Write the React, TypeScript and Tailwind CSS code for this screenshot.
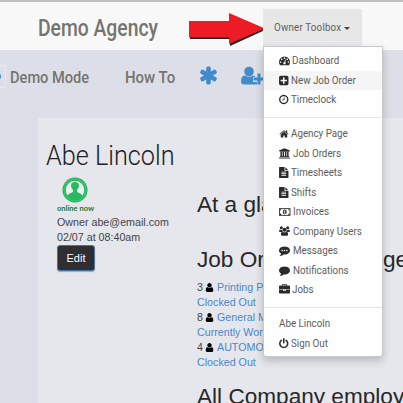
import React from "react";

const ASTERISK =
  "M1546 1050q46 26 59.5 77.5t-12.5 97.5l-64 110q-26 46-77.5 59.5t-97.5-12.5l-266-153v307q0 52-38 90t-90 38h-128q-52 0-90-38t-38-90v-307l-266 153q-46 26-97.5 12.5t-77.5-59.5l-64-110q-26-46-12.5-97.5t59.5-77.5l266-154-266-154q-46-26-59.5-77.5t12.5-97.5l64-110q26-46 77.5-59.5t97.5 12.5l266 153v-307q0-52 38-90t90-38h128q52 0 90 38t38 90v307l266-153q46-26 97.5-12.5t77.5 59.5l64 110q26 46 12.5 97.5t-59.5 77.5l-266 154z";
const PLUS =
  "M1408 960v-128q0-26-19-45t-45-19h-320v-320q0-26-19-45t-45-19h-128q-26 0-45 19t-19 45v320h-320q-26 0-45 19t-19 45v128q0 26 19 45t45 19h320v320q0 26 19 45t45 19h128q26 0 45-19t19-45v-320h320q26 0 45-19t19-45zm256-544v960q0 119-84.5 203.5t-203.5 84.5h-960q-119 0-203.5-84.5t-84.5-203.5v-960q0-119 84.5-203.5t203.5-84.5h960q119 0 203.5 84.5t84.5 203.5z";
const CLOCK =
  "M1024 544v448q0 14-9 23t-23 9h-320q-14 0-23-9t-9-23v-64q0-14 9-23t23-9h224v-352q0-14 9-23t23-9h64q14 0 23 9t9 23zm416 352q0-148-73-273t-198-198-273-73-273 73-198 198-73 273 73 273 198 198 273 73 273-73 198-198 73-273zm224 0q0 209-103 385.5t-279.5 279.5-385.5 103-385.5-103-279.5-279.5-103-385.5 103-385.5 279.5-279.5 385.5-103 385.5 103 279.5 279.5 103 385.5z";
const GAUGE =
  "M384 1152q0-53-37.5-90.5t-90.5-37.5-90.5 37.5-37.5 90.5 37.5 90.5 90.5 37.5 90.5-37.5 37.5-90.5zm192-448q0-53-37.5-90.5t-90.5-37.5-90.5 37.5-37.5 90.5 37.5 90.5 90.5 37.5 90.5-37.5 37.5-90.5zm428 481l101-382q6-26-7.5-48.5t-38.5-29.5-48 6.5-30 39.5l-101 382q-60 5-107 43.5t-63 98.5q-20 77 20 146t117 89 146-20 89-117q16-60-6-117t-72-91zm660-33q0-53-37.5-90.5t-90.5-37.5-90.5 37.5-37.5 90.5 37.5 90.5 90.5 37.5 90.5-37.5 37.5-90.5zm-640-640q0-53-37.5-90.5t-90.5-37.5-90.5 37.5-37.5 90.5 37.5 90.5 90.5 37.5 90.5-37.5 37.5-90.5zm448 192q0-53-37.5-90.5t-90.5-37.5-90.5 37.5-37.5 90.5 37.5 90.5 90.5 37.5 90.5-37.5 37.5-90.5zm320 448q0 261-141 483-19 29-54 29h-1402q-35 0-54-29-141-221-141-483 0-182 71-348t191-286 286-191 348-71 348 71 286 191 191 286 71 348z";
const USER =
  "M1536 1399q0 109-62.5 187t-150.5 78h-854q-88 0-150.5-78t-62.5-187q0-85 8.5-160.5t31.5-152 58.5-131 94-89 134.5-34.5q131 128 313 128t313-128q76 0 134.5 34.5t94 89 58.5 131 31.5 152 8.5 160.5zm-256-887q0 159-112.5 271.5t-271.5 112.5-271.5-112.5-112.5-271.5 112.5-271.5 271.5-112.5 271.5 112.5 112.5 271.5z";
const HOME =
  "M1472 992v480q0 26-19 45t-45 19h-384v-384h-256v384h-384q-26 0-45-19t-19-45v-480q0-1 .5-3t.5-3l575-474 575 474q1 2 1 6zm223-69l-62 74q-8 9-21 11h-3q-13 0-21-7l-692-577-692 577q-12 8-24 7-13-2-21-11l-62-74q-8-10-7-23.5t11-21.5l719-599q32-26 76-26t76 26l244 204v-195q0-14 9-23t23-9h192q14 0 23 9t9 23v408l219 182q10 8 11 21.5t-7 23.5z";
const BANK =
  "M896 60L1792 420v128h-120q0 50-70 50H190q-70 0-70-50H0V420zM230 660h240v700h110V660h240v700h152V660h240v700h110V660h240v700h50q60 0 60 56v56H120v-56q0-56 60-56h50zM60 1530h1672q60 0 60 56v110H0v-110q0-56 60-56z";
const FILE =
  "M1596 476q14 14 28 36h-472v-472q22 14 36 28zm-476 164h544v1056q0 40-28 68t-68 28h-1344q-40 0-68-28t-28-68v-1600q0-40 28-68t68-28h800v544q0 40 28 68t68 28zm160 736v-64q0-14-9-23t-23-9h-704q-14 0-23 9t-9 23v64q0 14 9 23t23 9h704q14 0 23-9t9-23zm0-256v-64q0-14-9-23t-23-9h-704q-14 0-23 9t-9 23v64q0 14 9 23t23 9h704q14 0 23-9t9-23zm0-256v-64q0-14-9-23t-23-9h-704q-14 0-23 9t-9 23v64q0 14 9 23t23 9h704q14 0 23-9t9-23z";
const COMMENT =
  "M1792 896q0 174-120 321.5t-326 233-450 85.5q-70 0-145-8-198 175-460 242-49 14-114 22-17 2-30.5-9t-17.5-29v-1q-3-4-.5-12t2-10 4.5-9.5l6-9 7-8.5 8-9q7-8 31-34.5t34.5-38 31-39.5 32.5-51 27-59 26-76q-157-89-247.5-220t-90.5-281q0-174 120-321.5t326-233 450-85.5 450 85.5 326 233 120 321.5z";
const CASE =
  "M640 256h512v-128h-512v128zm1152 640v480q0 66-47 113t-113 47h-1472q-66 0-113-47t-47-113v-480h672v160q0 26 19 45t45 19h320q26 0 45-19t19-45v-160h672zm-768 0v128h-256v-128h256zm768-480v384h-1792v-384q0-66 47-113t113-47h352v-160q0-40 28-68t68-28h576q40 0 68 28t28 68v160h352q66 0 113 47t47 113z";
const POWER =
  "M1664 896q0 156-61 298t-164 245-245 164-298 61-298-61-245-164-164-245-61-298q0-182 80.5-343t226.5-270q43-32 95.5-25t83.5 50q32 42 24.5 94.5t-49.5 84.5q-98 74-151.5 181t-53.5 228q0 104 40.5 198.5t109.5 163.5 163.5 109.5 198.5 40.5 198.5-40.5 163.5-109.5 109.5-163.5 40.5-198.5q0-121-53.5-228t-151.5-181q-42-32-49.5-84.5t24.5-94.5q31-43 84-50t95 25q146 109 226.5 270t80.5 343zm-640-768v640q0 52-38 90t-90 38-90-38-38-90v-640q0-52 38-90t90-38 90 38 38 90z";

function Glyph({ d, box = "0 0 1792 1792", className = "h-[11px] w-[11px]", children }: { d?: string; box?: string; className?: string; children?: React.ReactNode }) {
  return (
    <svg viewBox={box} className={`shrink-0 ${className}`} fill="currentColor">
      {d && <path d={d} />}
      {children}
    </svg>
  );
}

const SQUARE = "128 0 1536 1792";

type Item = { label: string; icon?: React.ReactNode; gap?: string; active?: boolean };

const groups: Item[][] = [
  [
    { label: "Dashboard", icon: <Glyph d={GAUGE} />, gap: "gap-[2px]" },
    { label: "New Job Order", icon: <Glyph d={PLUS} box={SQUARE} className="h-[11px] w-[9.5px]" />, active: true },
    { label: "Timeclock", icon: <Glyph d={CLOCK} box={SQUARE} className="h-[11px] w-[9.5px]" />, gap: "gap-[2px]" },
  ],
  [
    { label: "Agency Page", icon: <Glyph d={HOME} className="h-[10px] w-[10px]" />, gap: "gap-[2px]" },
    { label: "Job Orders", icon: <Glyph d={BANK} />, gap: "gap-[3px]" },
    { label: "Timesheets", icon: <Glyph d={FILE} box={SQUARE} className="h-[11px] w-[9.5px]" />, gap: "gap-[2px]" },
    { label: "Shifts", icon: <Glyph d={FILE} box={SQUARE} className="h-[11px] w-[9.5px]" />, gap: "gap-[2px]" },
    {
      label: "Invoices",
      icon: (
        <Glyph box="0 0 24 16" className="h-[8px] w-[11.5px]">
          <rect x="1" y="1" width="22" height="14" fill="none" stroke="currentColor" strokeWidth="1.8" />
          <path d="M2 2h3a3 3 0 0 1-3 3zM22 2h-3a3 3 0 0 0 3 3zM2 14h3a3 3 0 0 0-3-3zM22 14h-3a3 3 0 0 1 3-3z" />
          <ellipse cx="12" cy="8" rx="4" ry="5" />
          <path d="M11.3 5h1.6v5h1v1.2h-3.6V10h1V7l-1 .3V6z" fill="white" />
        </Glyph>
      ),
    },
    {
      label: "Company Users",
      icon: (
        <Glyph box="0 0 24 22" className="h-[10px] w-[11px]">
          <circle cx="5" cy="3.8" r="3.3" />
          <circle cx="19" cy="3.8" r="3.3" />
          <path d="M2 7.5q3 2 5 .5-.5 3 1.500 5H1.800Q0 13 0 11q0-3 2-3.500zM22 7.500q-3 2-5 .500.500 3-1.500 5h6.700Q24 13 24 11q0-3-2-3.500z" />
          <circle cx="12" cy="8.200" r="4.600" />
          <path d="M7.500 12.500q4.500 3 9 0Q20 13 20 18.500q0 3-3 3H7q-3 0-3-3 0-5.500 3.500-6z" />
        </Glyph>
      ),
    },
    {
      label: "Messages",
      icon: (
        <Glyph d={COMMENT}>
          <g fill="white">
            <circle cx="512" cy="896" r="128" />
            <circle cx="896" cy="896" r="128" />
            <circle cx="1280" cy="896" r="128" />
          </g>
        </Glyph>
      ),
    },
    { label: "Notifications", icon: <Glyph d={COMMENT} /> },
    { label: "Jobs", icon: <Glyph d={CASE} />, gap: "gap-[2px]" },
  ],
  [{ label: "Abe Lincoln" }, { label: "Sign Out", icon: <Glyph d={POWER} box={SQUARE} className="h-[11px] w-[9.5px]" />, gap: "gap-[2px]" }],
];

function Menu() {
  return (
    <div className="absolute left-0 top-[37px] z-10 h-[311px] w-[120px] rounded-b-[3px] border border-[#c8c8cc] bg-white pt-[4px] shadow-[0_4px_8px_rgba(0,0,0,0.2)]">
      {groups.map((group, i) => (
        <div key={i} className={i ? "mt-[7px] border-t border-[#e5e5e5] pt-[6.5px]" : ""}>
          {group.map((item) => (
            <div
              key={item.label}
              className={`flex h-[19.5px] items-center pl-[15px] text-[#2b2b2b] ${item.gap ?? "gap-[2.5px]"} ${item.active ? "bg-[#f5f5f5]" : ""}`}
            >
              {item.icon}
              <span className="origin-left scale-x-[0.89] whitespace-nowrap pt-px font-['Roboto',sans-serif] text-[11px] font-normal text-[#5c5c5c]">{item.label}</span>
            </div>
          ))}
        </div>
      ))}
    </div>
  );
}

const orders = [
  { count: 3, name: "Printing P", status: "Clocked Out" },
  { count: 8, name: "General M", status: "Currently Wor" },
  { count: 4, name: "AUTOMO", status: "Clocked Out" },
];

export default function App() {
  return (
    <div className="h-[403px] w-[403px] overflow-hidden bg-[#dddfe8] font-['Liberation_Sans',sans-serif] text-[10.7px] text-[#444]">
      <header className="flex h-[50px] border-t-2 border-[#c0c0c0] bg-[#f8f8f8] pl-[38px]">
        <h1 className="w-[150px] origin-left scale-x-[0.84] whitespace-nowrap pt-[10px] font-['Roboto',sans-serif] text-[23px] font-medium leading-[34px] text-[#747470]">Demo Agency</h1>
        <svg viewBox="0 0 77 36" className="mt-[10px] h-[36px] w-[77px] shrink-0">
          <path d="M2 12h40V4l35 14-35 16v-7H2z" fill="#222" />
          <path d="M1 9h40V1l36 15.500-36 15.500v-6.500H1z" fill="#ed1c24" />
        </svg>
        <div className="relative z-10 ml-[-2px] mt-[7px] h-[37px] w-[99px] bg-[#e7e7e7]">
          <button className="flex h-[37px] items-center gap-[2px] pl-[11px] pt-[2px] font-['Roboto',sans-serif] text-[11px] text-[#606060]">
            <span className="w-[68px] origin-left scale-x-[0.89] whitespace-nowrap text-left tracking-[0.2px]">Owner Toolbox</span>
            <span className="border-x-[3px] border-t-[3px] border-x-transparent border-t-[#444]" />
          </button>
          <Menu />
        </div>
      </header>
      <nav className="flex h-[68px] items-start pt-[15px] font-['Roboto',sans-serif] text-[17px] font-medium leading-[24px] text-[#747470]">
        <span className="h-[23px] w-[6px] overflow-hidden rounded-r-[2px] border border-l-0 border-[#e8e9ef] pt-[7px]">
          <span className="ml-[-6px] block h-[7px] w-[7px] rounded-full bg-[#428bca]" />
        </span>
        <span className="ml-[4px] w-[115px] origin-left scale-x-[0.86] whitespace-nowrap">Demo Mode</span>
        <span className="w-[73px] origin-left scale-x-[0.88] whitespace-nowrap">How To</span>
        <Glyph d={ASTERISK} className="h-[21px] w-[21px] text-[#428bca]" />
        <Glyph box="0 0 24 20" className="ml-[22px] mt-[1px] h-[20px] w-[24px] text-[#428bca]">
          <circle cx="8" cy="5.500" r="4.800" />
          <path d="M4 9.500q4 2.600 8 0 1.500 0 2.500 1.500h-2.500v5h4v2.500q0 0-1 0H3q-3 0-3-3 0-6 4-6z" />
          <path d="M16.500 7.500h3V11.500h4v3h-4v4h-3v-4h-4v-3h4z" />
        </Glyph>
      </nav>
      <main className="ml-[38px] flex h-[285px] bg-[#e6e7ed]">
        <section className="w-[159px] shrink-0 pl-[8px]">
          <h2 className="h-[58px] origin-left scale-x-[0.935] whitespace-nowrap pt-[20px] font-['Roboto',sans-serif] text-[27px] font-light leading-[36px] text-[#222]">Abe Lincoln</h2>
          <div className="pl-[11px]">
            <svg viewBox="0 0 26 26" className="ml-[5px] mt-px h-[26px] w-[26px]">
              <circle cx="13" cy="13" r="12.500" fill="#25a458" />
              <circle cx="13" cy="13" r="11.700" fill="#2ecc67" />
              <circle cx="13" cy="13" r="9.700" fill="#e9f3ee" stroke="#249b55" strokeWidth=".8" />
              <path d="M5 19q2-3 6-4v-2q-2-2-2-4 0-4 4-4t4 4q0 2-2 4v2q4 1 6 4-3 4-8 4t-8-4z" fill="#2ab862" />
            </svg>
            <p className="w-[40px] origin-left scale-x-[0.94] whitespace-nowrap font-['Lato',sans-serif] text-[8px] font-bold leading-[11px] text-[#177540]">online now</p>
            <p className="mt-px whitespace-nowrap leading-[15px]">Owner abe@email.com</p>
            <p className="whitespace-nowrap leading-[15px]">02/07 at 08:40am</p>
            <button className="h-[26px] w-[38px] rounded-[3px] border border-[#4077aa] bg-[#2e2e33] text-[11px] text-white shadow-[0_1px_1px_rgba(0,0,0,0.3)]">Edit</button>
          </div>
        </section>
        <section className="shrink-0 whitespace-nowrap">
          <h3 className="pt-[71px] text-[22.6px] leading-[32px] text-[#282828]">At a gla</h3>
          <h3 className="mt-[23px] flex h-[36px] text-[22.6px] leading-[32px] text-[#282828]">
            <span className="w-[186px]">Job Or</span>
            <span>ge</span>
          </h3>
          {orders.map((o) => (
            <div key={o.name} className="leading-[15px]">
              <div className="flex items-center">
                <span className="w-[8px]">{o.count}</span>
                <Glyph d={USER} box="256 128 1280 1536" className="h-[9px] w-[9px] text-black" />
                <a className="ml-[3px] text-[#4a86cc]">{o.name}</a>
              </div>
              <a className="block text-[#4a86cc]">{o.status}</a>
            </div>
          ))}
          <h3 className="mt-[11px] text-[22.6px] leading-[32px] text-[#282828]">All Company employ</h3>
        </section>
      </main>
    </div>
  );
}
